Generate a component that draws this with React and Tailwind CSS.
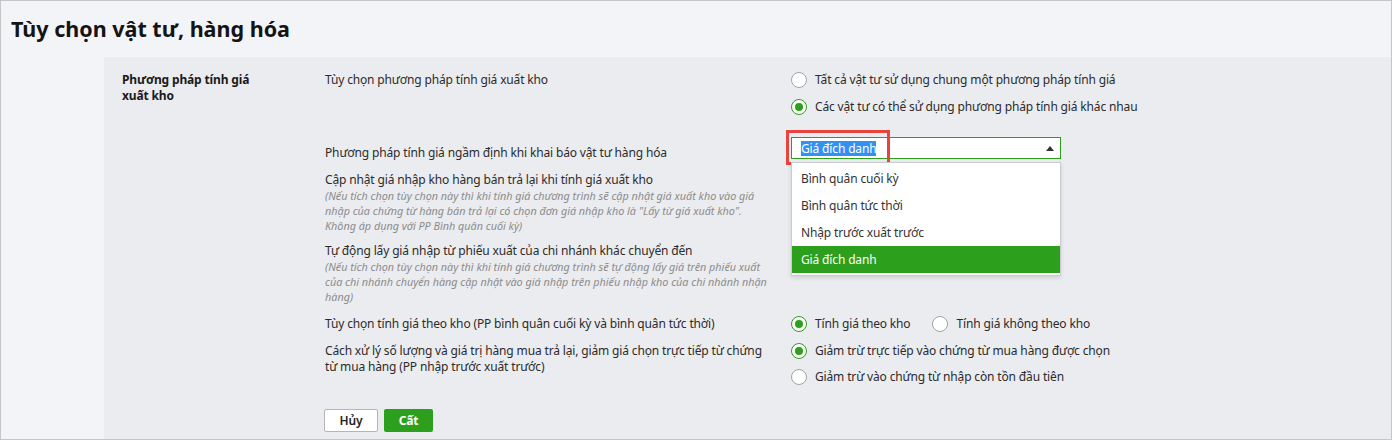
import React from "react";

function Radio({ checked, children }) {
  return (
    <label className="flex items-center gap-2 h-4 whitespace-nowrap">
      {checked ? (
        <span className="w-4 h-4 rounded-full border-[1.5px] border-[#2ca01c] bg-white flex items-center justify-center shrink-0">
          <span className="w-2 h-2 rounded-full bg-[#2ca01c]" />
        </span>
      ) : (
        <span className="w-4 h-4 rounded-full border border-[#a3a3a3] bg-white shrink-0" />
      )}
      <span>{children}</span>
    </label>
  );
}

function Note({ lines }) {
  return (
    <div className="text-[10.8px] leading-[15px] italic tracking-normal text-[#8b8b8b]">
      {lines.map((l, i) => (
        <div key={i} className="whitespace-nowrap">
          {l}
        </div>
      ))}
    </div>
  );
}

const methods = [
  "Bình quân cuối kỳ",
  "Bình quân tức thời",
  "Nhập trước xuất trước",
  "Giá đích danh",
];

export default function App() {
  return (
    <div className="w-[1392px] h-[440px] border border-[#c6c6c6] bg-[#f3f4f8] flex flex-col font-['Noto_Sans',sans-serif] text-[12px] tracking-[-0.15px] leading-4 text-[#2b2b2b]">
      <header className="h-[56px] shrink-0 pl-[10px] flex items-center">
        <h1 className="text-[21.5px] font-bold tracking-normal text-[#141414] leading-[30px]">
          Tùy chọn vật tư, hàng hóa
        </h1>
      </header>

      <div className="flex flex-1 min-h-0">
        <div className="w-[103px] shrink-0" />
        <section className="flex-1 bg-[#ebecf0] flex pl-[18px] pt-[15px]">
          <div className="w-[203px] shrink-0 font-bold text-[#1a1a1a]">
            <div>Phương pháp tính giá</div>
            <div>xuất kho</div>
          </div>

          <div className="flex-1 flex flex-col">
            {/* costing method scope */}
            <div className="flex">
              <div className="w-[466px] shrink-0">Tùy chọn phương pháp tính giá xuất kho</div>
              <div className="flex flex-col gap-[11px]">
                <Radio>Tất cả vật tư sử dụng chung một phương pháp tính giá</Radio>
                <Radio checked>Các vật tư có thể sử dụng phương pháp tính giá khác nhau</Radio>
              </div>
            </div>

            {/* default method with open dropdown */}
            <div className="flex mt-[22px]">
              <div className="w-[466px] shrink-0 pt-[8px]">
                Phương pháp tính giá ngầm định khi khai báo vật tư hàng hóa
              </div>
              <div className="relative w-[270px] h-[22px]">
                <div className="h-full border border-[#2ca01c] bg-white flex items-center pl-[9px]">
                  <span className="bg-[#3390f5] text-white leading-[15px] inline-block">Giá đích danh</span>
                </div>
                <span className="absolute right-[7px] top-[9px] w-0 h-0 border-x-[4px] border-x-transparent border-b-[5px] border-b-[#333]" />
                <span className="absolute left-[-5px] top-[-7px] w-[104px] h-[35px] border-[3px] border-[#e8433d]" />
                <ul className="absolute left-0 top-[25px] w-[270px] bg-white border border-[#c9cbd0] shadow-[0_2px_4px_rgba(0,0,0,0.12)] py-[2px] z-10">
                  {methods.map((m, i) => (
                    <li
                      key={m}
                      className={
                        i === 3
                          ? "h-[27px] pl-[9px] flex items-center bg-[#2ca01c] text-white"
                          : "h-[27px] pl-[9px] flex items-center text-[#333]"
                      }
                    >
                      {m}
                    </li>
                  ))}
                </ul>
              </div>
            </div>

            <div className="mt-[11px] w-[466px]">
              <div>Cập nhật giá nhập kho hàng bán trả lại khi tính giá xuất kho</div>
              <Note
                lines={[
                  "(Nếu tích chọn tùy chọn này thì khi tính giá chương trình sẽ cập nhật giá xuất kho vào giá",
                  "nhập của chứng từ hàng bán trả lại có chọn đơn giá nhập kho là \"Lấy từ giá xuất kho\".",
                  "Không áp dụng với PP Bình quân cuối kỳ)",
                ]}
              />
            </div>

            <div className="mt-[10px] w-[466px]">
              <div>Tự động lấy giá nhập từ phiếu xuất của chi nhánh khác chuyển đến</div>
              <Note
                lines={[
                  "(Nếu tích chọn tùy chọn này thì khi tính giá chương trình sẽ tự động lấy giá trên phiếu xuất",
                  "của chi nhánh chuyển hàng cập nhật vào giá nhập trên phiếu nhập kho của chi nhánh nhận",
                  "hàng)",
                ]}
              />
            </div>

            <div className="flex mt-[12px]">
              <div className="w-[466px] shrink-0">
                Tùy chọn tính giá theo kho (PP bình quân cuối kỳ và bình quân tức thời)
              </div>
              <div className="flex gap-[22px]">
                <Radio checked>Tính giá theo kho</Radio>
                <Radio>Tính giá không theo kho</Radio>
              </div>
            </div>

            <div className="flex mt-[11px]">
              <div className="w-[466px] shrink-0">
                <div className="whitespace-nowrap">Cách xử lý số lượng và giá trị hàng mua trả lại, giảm giá chọn trực tiếp từ chứng</div>
                <div>từ mua hàng (PP nhập trước xuất trước)</div>
              </div>
              <div className="flex flex-col gap-[10px]">
                <Radio checked>Giảm trừ trực tiếp vào chứng từ mua hàng được chọn</Radio>
                <Radio>Giảm trừ vào chứng từ nhập còn tồn đầu tiên</Radio>
              </div>
            </div>

            <div className="flex gap-[6px] mt-[24px] -ml-px">
              <button className="w-[54px] h-[23px] bg-white border border-[#b5b5b5] rounded-[2px] font-semibold text-[#222]">
                Hủy
              </button>
              <button className="w-[49px] h-[23px] bg-[#2ca01c] rounded-[2px] font-bold text-white">
                Cất
              </button>
            </div>
          </div>
        </section>
      </div>
    </div>
  );
}
